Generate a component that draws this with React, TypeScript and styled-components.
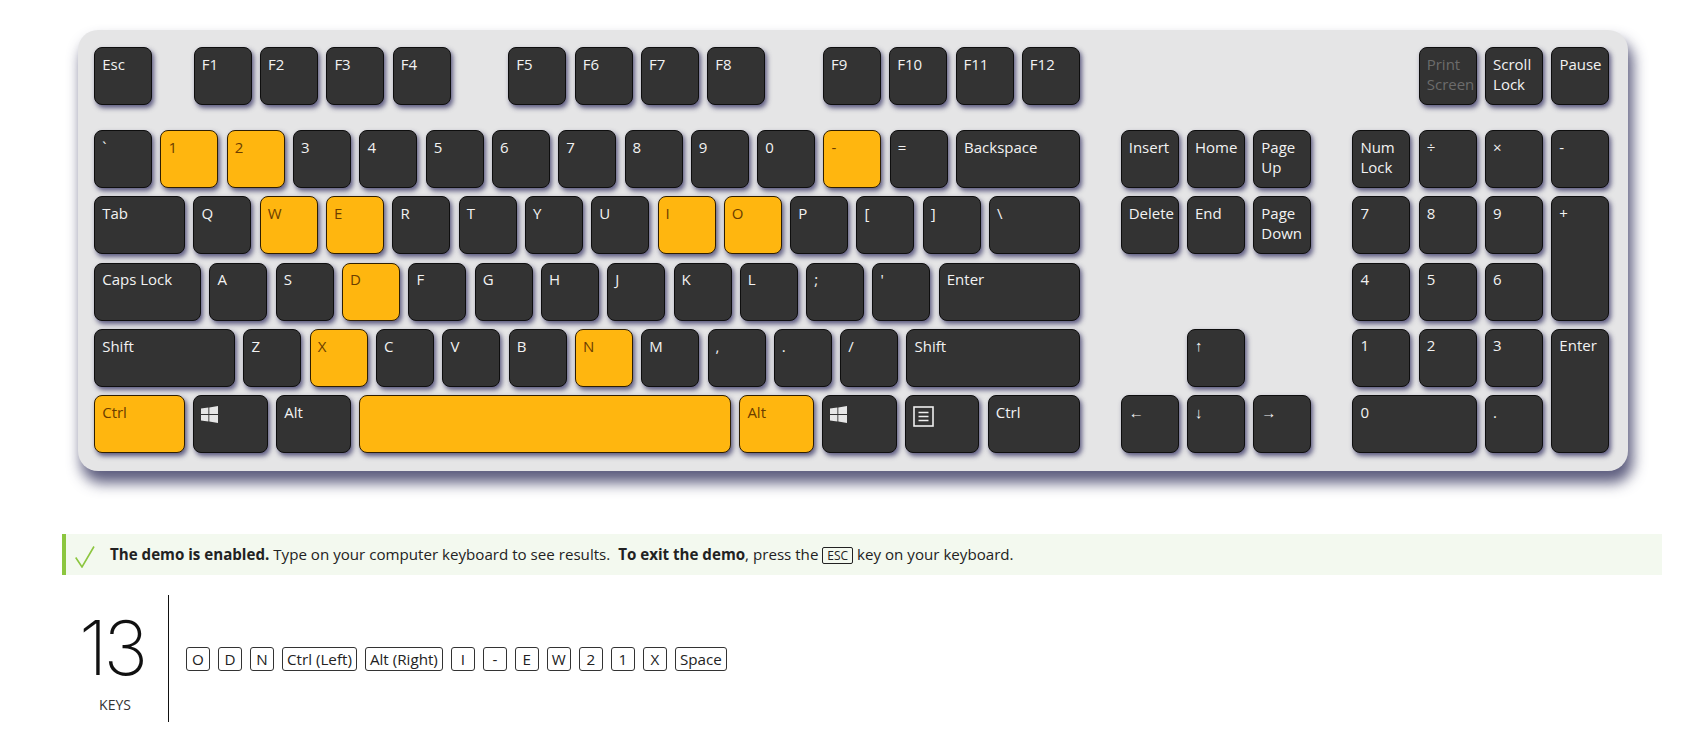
import React from 'react'
import styled, { createGlobalStyle } from 'styled-components'

const GlobalStyle = createGlobalStyle`
    html, body {
        margin: 0;
        padding: 0;
        background: #fff;
        font-family: "Open Sans", "Noto Sans", sans-serif;
    }
`

interface KeyDef {
    label?: string
    width?: number
    grow?: boolean
    on?: boolean
    dim?: boolean
    icon?: 'win' | 'menu'
    col?: number
    row?: number
    colSpan?: number
    rowSpan?: number
}

const k = (label: string, on = false): KeyDef => ({ label, on })
const wide = (label: string, width: number, on = false): KeyDef => ({ label, width, on })

const rows: KeyDef[][] = [
    [k('`'), k('1', true), k('2', true), k('3'), k('4'), k('5'), k('6'), k('7'), k('8'), k('9'), k('0'), k('-', true), k('='), { label: 'Backspace', grow: true }],
    [wide('Tab', 91), k('Q'), k('W', true), k('E', true), k('R'), k('T'), k('Y'), k('U'), k('I', true), k('O', true), k('P'), k('['), k(']'), { label: '\\', grow: true }],
    [wide('Caps Lock', 107), k('A'), k('S'), k('D', true), k('F'), k('G'), k('H'), k('J'), k('K'), k('L'), k(';'), k("'"), { label: 'Enter', grow: true }],
    [wide('Shift', 141), k('Z'), k('X', true), k('C'), k('V'), k('B'), k('N', true), k('M'), k(','), k('.'), k('/'), { label: 'Shift', grow: true }],
    [
        wide('Ctrl', 91, true),
        { icon: 'win', width: 74.5 },
        wide('Alt', 74.5),
        { width: 372, on: true },
        wide('Alt', 74.5, true),
        { icon: 'win', width: 74.5 },
        { icon: 'menu', width: 74.5 },
        { label: 'Ctrl', grow: true },
    ],
]

const nav: KeyDef[] = [
    { label: 'Insert', col: 1, row: 1 },
    { label: 'Home', col: 2, row: 1 },
    { label: 'Page Up', col: 3, row: 1 },
    { label: 'Delete', col: 1, row: 2 },
    { label: 'End', col: 2, row: 2 },
    { label: 'Page Down', col: 3, row: 2 },
    { label: '↑', col: 2, row: 4 },
    { label: '←', col: 1, row: 5 },
    { label: '↓', col: 2, row: 5 },
    { label: '→', col: 3, row: 5 },
]

const numpad: KeyDef[] = [
    { label: 'Num Lock', col: 1, row: 1 },
    { label: '÷', col: 2, row: 1 },
    { label: '×', col: 3, row: 1 },
    { label: '-', col: 4, row: 1 },
    { label: '7', col: 1, row: 2 },
    { label: '8', col: 2, row: 2 },
    { label: '9', col: 3, row: 2 },
    { label: '+', col: 4, row: 2, rowSpan: 2 },
    { label: '4', col: 1, row: 3 },
    { label: '5', col: 2, row: 3 },
    { label: '6', col: 3, row: 3 },
    { label: '1', col: 1, row: 4 },
    { label: '2', col: 2, row: 4 },
    { label: '3', col: 3, row: 4 },
    { label: 'Enter', col: 4, row: 4, rowSpan: 2 },
    { label: '0', col: 1, row: 5, colSpan: 2 },
    { label: '.', col: 3, row: 5 },
]

const fnGroups = [['F1', 'F2', 'F3', 'F4'], ['F5', 'F6', 'F7', 'F8'], ['F9', 'F10', 'F11', 'F12']]

const pressed = ['O', 'D', 'N', 'Ctrl (Left)', 'Alt (Right)', 'I', '-', 'E', 'W', '2', '1', 'X', 'Space']

function WinIcon() {
    return (
        <svg width="17" height="17" viewBox="0 0 17 17" fill="#e6e6e6">
            <path d="M0 2.6 7.4 1.5V8H0zM8.3 1.4 17 0V8H8.3zM0 9H7.4V15.5L0 14.4zM8.3 9H17V17L8.3 15.6z" />
        </svg>
    )
}

function MenuIcon() {
    return (
        <svg width="21" height="21" viewBox="0 0 21 21" fill="none" stroke="#eeeeee">
            <rect x="1" y="1" width="19" height="19" strokeWidth="1.6" />
            <path d="M5.5 6.5H15.5M5.5 10.5H15.5M5.5 14.5H15.5" strokeWidth="1.5" />
        </svg>
    )
}

function KeyCap({ def }: { def: KeyDef }) {
    return (
        <Key
            $on={def.on}
            $dim={def.dim}
            $width={def.width}
            $grow={def.grow}
            $col={def.col}
            $row={def.row}
            $colSpan={def.colSpan}
            $rowSpan={def.rowSpan}
        >
            {def.icon === 'win' && <IconSlot><WinIcon /></IconSlot>}
            {def.icon === 'menu' && <IconSlot><MenuIcon /></IconSlot>}
            {def.label}
        </Key>
    )
}

export default function App() {
    return (
        <Page>
            <GlobalStyle />
            <Keyboard>
                <MainBlock>
                    <FunctionRow>
                        <KeyCap def={k('Esc')} />
                        {fnGroups.map((group) => (
                            <FnGroup key={group[0]}>
                                {group.map((name) => <KeyCap key={name} def={k(name)} />)}
                            </FnGroup>
                        ))}
                    </FunctionRow>
                    {rows.map((row, i) => (
                        <KeyRow key={i}>
                            {row.map((def, j) => <KeyCap key={j} def={def} />)}
                        </KeyRow>
                    ))}
                </MainBlock>
                <NavBlock>
                    {nav.map((def) => <KeyCap key={def.label} def={def} />)}
                </NavBlock>
                <RightBlock>
                    <SystemRow>
                        <KeyCap def={{ label: 'Print Screen', dim: true }} />
                        <KeyCap def={k('Scroll Lock')} />
                        <KeyCap def={k('Pause')} />
                    </SystemRow>
                    <NumpadGrid>
                        {numpad.map((def) => <KeyCap key={def.label} def={def} />)}
                    </NumpadGrid>
                </RightBlock>
            </Keyboard>

            <Notice>
                <CheckIcon width="20" height="22" viewBox="0 0 20 22" fill="none">
                    <path d="M0.7 11.5 7 21 19 0.5" stroke="#8cc63f" strokeWidth="1.6" />
                </CheckIcon>
                <NoticeText>
                    <b>The demo is enabled.</b> Type on your computer keyboard to see results.&nbsp; <b>To exit the demo</b>, press the <EscKey>ESC</EscKey> key on your keyboard.
                </NoticeText>
            </Notice>

            <Results>
                <Counter>
                    <CountNumber>13</CountNumber>
                    <CountLabel>KEYS</CountLabel>
                </Counter>
                <ChipList>
                    {pressed.map((name) => <Chip key={name}>{name}</Chip>)}
                </ChipList>
            </Results>
        </Page>
    )
}

const Page = styled.div`
    width: 1700px;
    height: 730px;
    overflow: hidden;
    padding-top: 30px;
    box-sizing: border-box;
    color: #1a1a1a;
`

const Keyboard = styled.div`
    width: 1550px;
    height: 441px;
    box-sizing: border-box;
    margin-left: 78px;
    padding: 17px 18px 18px 16.2px;
    display: flex;
    gap: 41px;
    background: #e5e5e6;
    border-radius: 20px;
    box-shadow: 4px 11px 14px 1px rgba(66, 66, 104, 0.85);
`

const MainBlock = styled.div`
    width: 985.5px;
    display: flex;
    flex-direction: column;
    gap: 8.33px;
`

const KeyRow = styled.div`
    display: flex;
    gap: 8.3px;
`

const FunctionRow = styled(KeyRow)`
    gap: 41.6px;
    margin-bottom: 16.7px;
`

const FnGroup = styled(KeyRow)`
    & + & {
        margin-left: 16.1px;
    }
`

const NavBlock = styled.div`
    width: 190.7px;
    margin-top: 83px;
    display: grid;
    grid-template-columns: repeat(3, 58px);
    grid-template-rows: repeat(5, 58px);
    gap: 8.33px;
`

const RightBlock = styled.div`
    width: 257px;
    display: flex;
    flex-direction: column;
    gap: 25px;
`

const SystemRow = styled(KeyRow)`
    justify-content: flex-end;
    gap: 8.33px;
`

const NumpadGrid = styled.div`
    display: grid;
    grid-template-columns: repeat(4, 58px);
    grid-template-rows: repeat(5, 58px);
    gap: 8.33px;
`

const Key = styled.div<{
    $on?: boolean
    $dim?: boolean
    $width?: number
    $grow?: boolean
    $col?: number
    $row?: number
    $colSpan?: number
    $rowSpan?: number
}>`
    box-sizing: border-box;
    height: ${(p) => (p.$rowSpan ? 'auto' : '58px')};
    width: ${(p) => (p.$grow || p.$colSpan ? 'auto' : `${p.$width ?? 58}px`)};
    flex: ${(p) => (p.$grow ? '1 1 0' : '0 0 auto')};
    grid-column: ${(p) => (p.$col ? `${p.$col} / span ${p.$colSpan ?? 1}` : 'auto')};
    grid-row: ${(p) => (p.$row ? `${p.$row} / span ${p.$rowSpan ?? 1}` : 'auto')};
    padding: 5.5px 0 0 7px;
    font-size: 15px;
    line-height: 20px;
    word-spacing: ${(p) => ((p.$width && p.$width > 58) || p.$grow ? 'normal' : '100vw')};
    overflow: hidden;
    border-radius: 8px;
    border: 1px solid ${(p) => (p.$on ? '#2e1e00' : '#0e0e0e')};
    background: ${(p) => (p.$on ? '#ffb60f' : '#333333')};
    color: ${(p) => (p.$on ? '#6b3d00' : p.$dim ? '#6c6c6c' : '#f2f2f2')};
    box-shadow: 2px 3px 5px rgba(44, 42, 92, 0.75);
`

const IconSlot = styled.span`
    display: block;
    margin-top: 4px;
`

const Notice = styled.div`
    width: 1600px;
    height: 41px;
    box-sizing: border-box;
    margin: 63px 0 0 62px;
    padding-left: 9px;
    display: flex;
    align-items: center;
    background: #f3f9ef;
    border-left: 4px solid #8cc63f;
`

const CheckIcon = styled.svg`
    flex: none;
    margin-top: 4px;
`

const NoticeText = styled.div`
    margin: -2px 0 0 15px;
    font-size: 15.13px;
    white-space: pre;
    color: #222;
`

const EscKey = styled.span`
    display: inline-block;
    font-size: 12px;
    line-height: 15px;
    padding: 0 4px;
    border: 1px solid #222;
    border-radius: 2px;
`

const Results = styled.div`
    display: flex;
    margin: 20px 0 0 62px;
    height: 127px;
`

const Counter = styled.div`
    width: 106px;
    flex: none;
    border-right: 1px solid #111;
    display: flex;
    flex-direction: column;
    align-items: center;
    padding-top: 8px;
`

const CountNumber = styled.div`
    font-family: "Inter", sans-serif;
    font-weight: 200;
    font-size: 75px;
    line-height: 90px;
    letter-spacing: -4px;
    margin-left: -7px;
    color: #111;
`

const CountLabel = styled.div`
    font-size: 14px;
    line-height: 20px;
    margin-top: 2px;
    color: #333;
`

const ChipList = styled.div`
    display: flex;
    align-items: center;
    gap: 8px;
    padding-left: 17px;
`

const Chip = styled.span`
    box-sizing: border-box;
    min-width: 24px;
    height: 24px;
    padding: 0 4px;
    display: flex;
    align-items: center;
    justify-content: center;
    font-size: 15.2px;
    white-space: nowrap;
    border: 1px solid #333;
    border-radius: 3px;
    color: #222;
`
